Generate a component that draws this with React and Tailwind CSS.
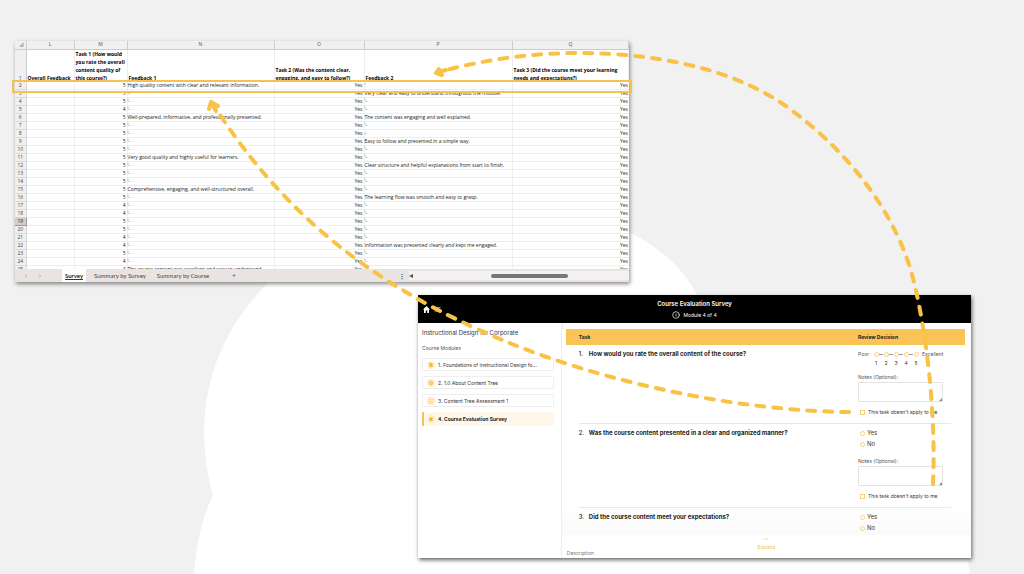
import { useState } from "react";
import {
  ListCollapse,
  CircleChevronLeft,
  ChevronUp,
  ChevronLeft,
  ChevronRight,
} from "lucide-react";

const EMPTY = "'-";

// [row number, task 1 score, feedback 1, task 2, feedback 2, task 3]
const ROWS = [
  [2, 5, "High quality content with clear and relevant information.", "Yes", "'", "Yes"],
  [3, 5, EMPTY, "Yes", "Very clear and easy to understand throughout the module.", "Yes"],
  [4, 5, EMPTY, "Yes", EMPTY, "Yes"],
  [5, 4, EMPTY, "Yes", EMPTY, "Yes"],
  [6, 5, "Well-prepared, informative, and professionally presented.", "Yes", "The content was engaging and well explained.", "Yes"],
  [7, 5, EMPTY, "Yes", EMPTY, "Yes"],
  [8, 5, EMPTY, "Yes", "-", "Yes"],
  [9, 5, EMPTY, "Yes", "Easy to follow and presented in a simple way.", "Yes"],
  [10, 5, EMPTY, "Yes", EMPTY, "Yes"],
  [11, 5, "Very good quality and highly useful for learners.", "Yes", EMPTY, "Yes"],
  [12, 5, EMPTY, "Yes", "Clear structure and helpful explanations from start to finish.", "Yes"],
  [13, 5, EMPTY, "Yes", EMPTY, "Yes"],
  [14, 5, EMPTY, "Yes", EMPTY, "Yes"],
  [15, 5, "Comprehensive, engaging, and well-structured overall.", "Yes", EMPTY, "Yes"],
  [16, 5, EMPTY, "Yes", "The learning flow was smooth and easy to grasp.", "Yes"],
  [17, 4, EMPTY, "Yes", EMPTY, "Yes"],
  [18, 4, EMPTY, "Yes", EMPTY, "Yes"],
  [19, 5, EMPTY, "Yes", EMPTY, "Yes"],
  [20, 5, EMPTY, "Yes", EMPTY, "Yes"],
  [21, 4, EMPTY, "Yes", EMPTY, "Yes"],
  [22, 4, EMPTY, "Yes", "Information was presented clearly and kept me engaged.", "Yes"],
  [23, 5, EMPTY, "Yes", EMPTY, "Yes"],
  [24, 4, EMPTY, "Yes", EMPTY, "Yes"],
  [25, 4, "The course content was excellent and easy to understand.", "Yes", EMPTY, "Yes"],
];

const HEADINGS = [
  "Overall Feedback",
  "Task 1 (How would you rate the overall content quality of this course?)",
  "Feedback 1",
  "Task 2 (Was the content clear, engaging, and easy to follow?)",
  "Feedback 2",
  "Task 3 (Did the course meet your learning needs and expectations?)",
];

const MODULES = [
  { id: 1, label: "1. Foundations of Instructional Design fo...", icon: "file" },
  { id: 2, label: "2. 1.0 About Content Tree", icon: "play" },
  { id: 3, label: "3. Content Tree Assessment 1", icon: "list" },
  { id: 4, label: "4. Course Evaluation Survey", icon: "clipboard" },
];

function Backdrop() {
  return (
    <svg
      className="absolute inset-0 h-full w-full"
      viewBox="0 0 1024 574"
      preserveAspectRatio="none"
      aria-hidden="true"
    >
      <path
        d="M194 574C196 545 202 518 213 495C193 425 205 345 268 283C330 215 560 190 633 234C662 249 684 270 697 295L960 500L970 574Z"
        fill="#fff"
      />
    </svg>
  );
}

// dashed arrows that link a survey answer to its spreadsheet cell
function Arrows() {
  return (
    <svg
      className="pointer-events-none absolute inset-0 h-full w-full"
      viewBox="0 0 1024 574"
      preserveAspectRatio="none"
      fill="none"
      stroke="#f8c246"
      strokeWidth="4"
      strokeLinecap="round"
      strokeLinejoin="round"
      aria-hidden="true"
    >
      <path
        d="M849 412C740 411 610 384 507 342C462 323 395 293 328 237C285 201 245 155 213 104"
        strokeDasharray="8 9"
      />
      <path d="M209 109L211 102L218 106M211 102L216 111" />
      <path
        d="M933 484C936 420 928 340 914 282C899 220 853 152 780 102C724 66 650 53 578 53C530 53 482 60 439 72"
        strokeDasharray="8 9"
      />
      <path d="M439 69L436 73L442 75M436 73L446 70" />
    </svg>
  );
}

function Spreadsheet() {
  return (
    <section className="relative ml-[15px] w-[60%] bg-white font-['Open_Sans',sans-serif] text-[5px] leading-[7px] text-[#222] shadow-[1px_2px_4px_rgba(0,0,0,0.45)]">
      <div className="h-[228px] overflow-hidden">
        <table className="w-full table-fixed border-collapse">
          <colgroup>
            <col className="w-[11px]" />
            <col className="w-[48px]" />
            <col className="w-[53px]" />
            <col className="w-[147px]" />
            <col className="w-[90px]" />
            <col className="w-[148px]" />
            <col />
          </colgroup>
          <thead>
            <tr className="h-[8px] bg-[#f0f0f0] text-[#555]">
              <td className="border-r border-b border-[#ccc] p-0">
                <svg viewBox="0 0 11 7" className="block h-[7px] w-full">
                  <path d="M9 1V6H4Z" fill="#b5b5b5" />
                </svg>
              </td>
              {["L", "M", "N", "O", "P", "Q"].map((c) => (
                <th key={c} className="border-r border-b border-[#ccc] p-0 font-normal">
                  {c}
                </th>
              ))}
            </tr>
            <tr className="h-[32px] align-bottom leading-[8px] text-black">
              <th className="border-r border-[#ccc] bg-[#f0f0f0] p-0 font-normal text-[#444]">1</th>
              {HEADINGS.map((h) => (
                <th key={h} className="border-r border-[#ededed] p-0 pl-px text-left font-bold">
                  {h}
                </th>
              ))}
            </tr>
          </thead>
          <tbody>
            {ROWS.map(([n, score, fb1, t2, fb2, t3]) => (
              <tr key={n} className="h-[8px] whitespace-nowrap">
                <th
                  className={
                    n === 19
                      ? "border-r border-b border-[#999] bg-[#cfcfcf] p-0 font-normal"
                      : "border-r border-b border-[#d8d8d8] bg-[#f0f0f0] p-0 font-normal text-[#444]"
                  }
                >
                  {n}
                </th>
                <td className="border-r border-b border-[#ededed] p-0" />
                <td className="border-r border-b border-[#ededed] p-0 pr-px text-right">{score}</td>
                <td className="border-r border-b border-[#ededed] p-0">{fb1}</td>
                <td className="border-r border-b border-[#ededed] p-0 pr-px text-right">{t2}</td>
                <td className="border-r border-b border-[#ededed] p-0">{fb2}</td>
                <td className="border-b border-[#ededed] p-0 pr-px text-right">{t3}</td>
              </tr>
            ))}
          </tbody>
        </table>
      </div>

      <div className="flex h-[13px] items-center bg-[#e9e4e2] font-['Lato',sans-serif] text-[6px] text-[#444]">
        <div className="flex w-[47px] gap-[8px] pl-[8px] text-[#888]">
          <ChevronLeft size={6} />
          <ChevronRight size={6} />
        </div>
        <button className="h-full bg-white px-[3px] font-semibold text-black">
          <span className="border-b border-[#333]">Survey</span>
        </button>
        <button className="ml-[4px] px-[4px]">Summary by Survey</button>
        <button className="ml-[3px] px-[4px]">Summary by Course</button>
        <button className="ml-[19px]" aria-label="Add sheet">+</button>
        <div className="ml-auto flex w-[230px] items-center">
          <span className="w-[10px] font-bold">⋮</span>
          <div className="flex h-[9px] flex-1 items-center bg-[#f4f2f1]">
            <svg viewBox="0 0 4 4" className="size-[4px]">
              <path d="M4 0V4L0 2Z" fill="#555" />
            </svg>
            <div className="ml-[78px] h-[4px] w-[77px] rounded-full bg-[#777]" />
          </div>
        </div>
      </div>

      {/* highlighted response */}
      <div className="absolute -inset-x-[3px] top-[39px] h-[13px] border-2 border-[#f8c04e]" />
    </section>
  );
}

function ModuleIcon({ name }) {
  return (
    <svg viewBox="0 0 16 16" className="size-[8px] shrink-0" fill="none" stroke="#f8c04e">
      <circle cx="8" cy="8" r="7.5" fill="#fff6e0" stroke="#fbdc98" />
      {name === "file" && <path d="M5 4H9L11 6V12H5Z" fill="#f8b739" />}
      {name === "play" && (
        <>
          <circle cx="8" cy="8" r="4" fill="#f8b739" />
          <path d="M7 6L10 8L7 10Z" fill="#fff" stroke="none" />
        </>
      )}
      {name === "list" && <path d="M4 4H12V12H4ZM6 6.500H10M6 9.500H10" />}
      {name === "clipboard" && <path d="M5 5H11V12H5ZM7 4H9" fill="#f8b739" />}
    </svg>
  );
}

function Sidebar() {
  const [active, setActive] = useState(4);

  return (
    <aside className="w-[26%] shrink-0 border-r border-[#eee] px-[4px] pt-[6px] shadow-[1px_0_3px_rgba(0,0,0,0.08)]">
      <h2 className="text-[6px] leading-[8px] text-[#333]">Instructional Design for Corporate</h2>
      <h3 className="mt-[7px] text-[5px] leading-[8px] text-[#555]">Course Modules</h3>
      <ul className="mt-[6px] flex flex-col gap-[5px] pr-[3px]">
        {MODULES.map((m) => (
          <li key={m.id}>
            <button
              onClick={() => setActive(m.id)}
              className={
                m.id === active
                  ? "flex h-[14px] w-full items-center gap-[3px] rounded-[1px] border-l-2 border-[#f8c04e] bg-[#fff8ea] pl-[3px] text-left font-bold text-[#222]"
                  : "flex h-[13px] w-full items-center gap-[3px] rounded-[1px] border border-[#eee] pl-[4px] text-left text-[#333]"
              }
            >
              <ModuleIcon name={m.icon} />
              <span className="truncate text-[5px] leading-[8px]">{m.label}</span>
            </button>
          </li>
        ))}
      </ul>
    </aside>
  );
}

function Rating() {
  return (
    <div className="flex text-[5px] leading-[8px]">
      <span className="w-[13px] text-[#555]">Poor</span>
      {[1, 2, 3, 4, 5].map((n) => (
        <label key={n} className="relative flex w-[10px] flex-col items-center gap-px">
          <span className="flex h-[8px] items-center">
            <input
              type="radio"
              name="rating"
              className="size-[5px] appearance-none rounded-full border border-[#f9cf7d] bg-white"
            />
          </span>
          {n < 5 && <span className="absolute top-[4px] left-[8px] h-px w-[4px] bg-[#999]" />}
          {n}
        </label>
      ))}
      <span className="pl-px text-[#555]">Excellent</span>
    </div>
  );
}

function YesNo({ name }) {
  return (
    <div className="flex flex-col gap-[3px]">
      {["Yes", "No"].map((v) => (
        <label key={v} className="flex h-[8px] items-center gap-[2px] pl-[2px] text-[6px] leading-[8px]">
          <input
            type="radio"
            name={name}
            className="size-[5px] appearance-none rounded-full border border-[#f9cf7d] bg-white"
          />
          {v}
        </label>
      ))}
    </div>
  );
}

function Notes() {
  return (
    <>
      <label className="relative block w-[85px] text-[5px] leading-[8px] text-[#555]">
        Notes (Optional):
        <textarea className="mt-px block h-[20px] w-full resize-none rounded-[1px] border border-[#e2e2e2] bg-white" />
        <svg viewBox="0 0 4 4" className="absolute right-px bottom-px size-[3px]">
          <path d="M4 0V4H0Z" fill="#888" />
        </svg>
      </label>
      <label className="mt-[6px] flex h-[8px] items-center gap-[3px] pl-[2px] text-[5px] leading-[8px]">
        <input
          type="checkbox"
          className="size-[5px] appearance-none border border-[#f9cf7d] bg-white"
        />
        This task doesn't apply to me
      </label>
    </>
  );
}

function Question({ n, text, children, last }) {
  const line = last ? "p-0 pt-[5px]" : "border-b border-[#e8e8e8] p-0 pt-[5px] pb-[7px]";

  return (
    <tr className="align-top">
      <td className="p-0" />
      <td className={line}>
        <div className="flex text-[6px] leading-[8px] text-[#222]">
          <span className="w-[10px] font-medium">{n}.</span>
          <span className="font-bold">{text}</span>
        </div>
      </td>
      <td className={line}>{children}</td>
      <td className="p-0" />
    </tr>
  );
}

function Survey() {
  return (
    <section className="mr-[53px] w-[54%] self-end bg-white font-['Inter',sans-serif] text-[#333] shadow-[1px_2px_4px_rgba(0,0,0,0.6)]">
      <header className="grid h-[28px] grid-cols-[1fr_auto_1fr] items-center bg-black text-white">
        <div className="flex gap-[4px] pl-[5px]">
          <svg viewBox="0 0 14 14" className="size-[7px]" fill="white" role="img" aria-label="Home">
            <path d="M7 0L0 7H2V14H5.500V9H8.500V14H12V7H14Z" />
          </svg>
          <ListCollapse size={7} />
        </div>
        <div className="flex flex-col items-center gap-[3px]">
          <h1 className="text-[6px] leading-[8px] font-semibold">Course Evaluation Survey</h1>
          <div className="flex items-center gap-[3px] text-[5px] leading-[8px]">
            <CircleChevronLeft size={8} strokeWidth={2} />
            Module 4 of 4
          </div>
        </div>
      </header>

      <div className="flex h-[235px]">
        <Sidebar />
        <main className="flex min-w-0 flex-1 flex-col pt-[6px]">
          <div className="flex-1 overflow-hidden bg-linear-to-b from-white from-85% to-[#fafafa] pr-[6px] pl-[4px]">
            <table className="w-full table-fixed border-collapse">
              <colgroup>
                <col className="w-[13px]" />
                <col />
                <col className="w-[93px]" />
                <col className="w-[14px]" />
              </colgroup>
              <thead>
                <tr className="h-[16px] bg-[#f9c356] text-left text-[5px] leading-[8px] text-[#222]">
                  <td className="p-0" />
                  <th className="p-0 font-bold">Task</th>
                  <th className="p-0 font-bold">Review Decision</th>
                  <td className="p-0" />
                </tr>
              </thead>
              <tbody>
                <Question n={1} text="How would you rate the overall content of the course?">
                  <Rating />
                  <div className="mt-[6px]">
                    <Notes />
                  </div>
                </Question>
                <Question n={2} text="Was the course content presented in a clear and organized manner?">
                  <YesNo name="organized" />
                  <div className="mt-[9px]">
                    <Notes />
                  </div>
                </Question>
                <Question n={3} text="Did the course content meet your expectations?" last>
                  <YesNo name="expectations" />
                </Question>
              </tbody>
            </table>
          </div>
          <footer className="flex h-[23px] flex-col bg-white">
            <button className="flex flex-col items-center self-center text-[5px] leading-[8px] text-[#f8c04e]">
              <ChevronUp size={8} />
              Expand
            </button>
            <span className="pl-[5px] text-[5px] leading-[4px] text-[#777]">Description</span>
          </footer>
        </main>
      </div>
    </section>
  );
}

export default function App() {
  return (
    <div className="relative min-h-screen overflow-hidden bg-[#f1f1f1]">
      <Backdrop />
      <div className="relative flex flex-col gap-[13px] pt-[41px]">
        <Spreadsheet />
        <Survey />
      </div>
      <Arrows />
    </div>
  );
}
